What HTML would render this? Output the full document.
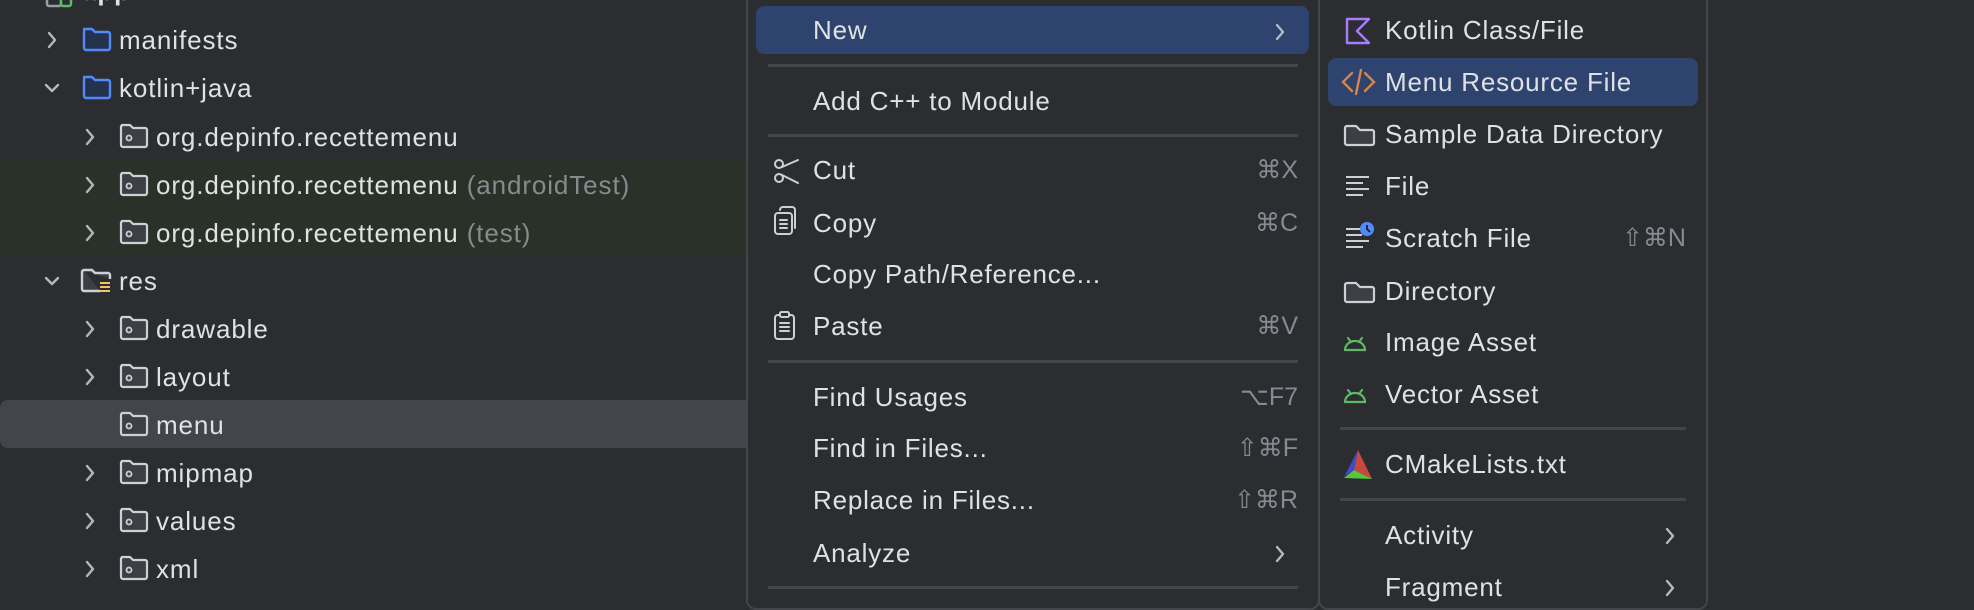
<!DOCTYPE html>
<html><head><meta charset="utf-8"><style>
*{margin:0;padding:0;box-sizing:border-box}
body{width:1974px;height:598px;background:#2b2d30;overflow:hidden;position:relative;font-family:"Liberation Sans",sans-serif;color:#dfe1e5}
.a{position:absolute}
.t{position:absolute;font-size:26px;letter-spacing:.9px;line-height:30px;white-space:nowrap}
.m{position:absolute;font-size:26px;letter-spacing:.8px;line-height:30px;white-space:nowrap}
.g{color:#868a91}
.sc{position:absolute;font-size:25px;color:#868a91;line-height:30px;white-space:nowrap;text-align:right}
.sep{position:absolute;height:3px;background:#43454a}
svg{position:absolute;overflow:visible}
</style></head><body>
<div class="a" style="left:0;top:160px;width:748px;height:96px;background:#2a3128"></div>
<div class="a" style="left:0;top:400px;width:748px;height:48px;background:#43454a;border-radius:8px 0 0 8px"></div>

<svg style="left:45px;top:-14px" width="30" height="22"><rect x="2" y="0" width="14" height="20" rx="2" fill="none" stroke="#9a9da3" stroke-width="2.5"/><rect x="16" y="4" width="10" height="16" rx="2" fill="#2b2d30" stroke="#5fb865" stroke-width="2.5"/></svg>
<div class="t" style="left:82px;top:-24px;font-weight:bold">app</div>

<svg style="left:0;top:0" width="760" height="598">
<g fill="none" stroke="#b4b8bf" stroke-width="2.4" stroke-linecap="round" stroke-linejoin="round">
<path d="M49 33 l6 7 -6 7"/>
<path d="M46 85 l6 6 6 -6"/>
<path d="M87 130 l6 7 -6 7"/>
<path d="M87 178 l6 7 -6 7"/>
<path d="M87 226 l6 7 -6 7"/>
<path d="M46 278 l6 6 6 -6"/>
<path d="M87 322 l6 7 -6 7"/>
<path d="M87 370 l6 7 -6 7"/>
<path d="M87 466 l6 7 -6 7"/>
<path d="M87 514 l6 7 -6 7"/>
<path d="M87 562 l6 7 -6 7"/>
</g>
<g fill="#25324d" stroke="#548af7" stroke-width="2.4" stroke-linejoin="round">
<path d="M84 29 h8 l3 3 h13 a2 2 0 0 1 2 2 v14 a2 2 0 0 1 -2 2 h-22 a2 2 0 0 1 -2 -2 v-17 a2 2 0 0 1 2 -2z"/>
<path d="M84 77 h8 l3 3 h13 a2 2 0 0 1 2 2 v14 a2 2 0 0 1 -2 2 h-22 a2 2 0 0 1 -2 -2 v-17 a2 2 0 0 1 2 -2z"/>
</g>
<path d="M84 270 h8 l3 3 h13 a2 2 0 0 1 2 2 v4 M100 291 h-16 a2 2 0 0 1 -2 -2 v-17 a2 2 0 0 1 2 -2" fill="#3c3f45" stroke="#ced0d6" stroke-width="2.4"/>
<g stroke="#f2c55c" stroke-width="2"><path d="M100 283 h10 M100 287 h10 M100 291 h10"/></g>
<g fill="#3c3f45" stroke="#ced0d6" stroke-width="2.2" stroke-linejoin="round">
<path d="M122 125 h8 l3 3 h12 a2 2 0 0 1 2 2 v15 a2 2 0 0 1 -2 2 h-22 a2 2 0 0 1 -2 -2 v-18 a2 2 0 0 1 2 -2z"/><circle cx="129" cy="138" r="2.5" fill="none" stroke-width="1.8"/>
<path d="M122 173 h8 l3 3 h12 a2 2 0 0 1 2 2 v15 a2 2 0 0 1 -2 2 h-22 a2 2 0 0 1 -2 -2 v-18 a2 2 0 0 1 2 -2z"/><circle cx="129" cy="186" r="2.5" fill="none" stroke-width="1.8"/>
<path d="M122 221 h8 l3 3 h12 a2 2 0 0 1 2 2 v15 a2 2 0 0 1 -2 2 h-22 a2 2 0 0 1 -2 -2 v-18 a2 2 0 0 1 2 -2z"/><circle cx="129" cy="234" r="2.5" fill="none" stroke-width="1.8"/>
<path d="M122 317 h8 l3 3 h12 a2 2 0 0 1 2 2 v15 a2 2 0 0 1 -2 2 h-22 a2 2 0 0 1 -2 -2 v-18 a2 2 0 0 1 2 -2z"/><circle cx="129" cy="330" r="2.5" fill="none" stroke-width="1.8"/>
<path d="M122 365 h8 l3 3 h12 a2 2 0 0 1 2 2 v15 a2 2 0 0 1 -2 2 h-22 a2 2 0 0 1 -2 -2 v-18 a2 2 0 0 1 2 -2z"/><circle cx="129" cy="378" r="2.5" fill="none" stroke-width="1.8"/>
<path d="M122 413 h8 l3 3 h12 a2 2 0 0 1 2 2 v15 a2 2 0 0 1 -2 2 h-22 a2 2 0 0 1 -2 -2 v-18 a2 2 0 0 1 2 -2z"/><circle cx="129" cy="426" r="2.5" fill="none" stroke-width="1.8"/>
<path d="M122 461 h8 l3 3 h12 a2 2 0 0 1 2 2 v15 a2 2 0 0 1 -2 2 h-22 a2 2 0 0 1 -2 -2 v-18 a2 2 0 0 1 2 -2z"/><circle cx="129" cy="474" r="2.5" fill="none" stroke-width="1.8"/>
<path d="M122 509 h8 l3 3 h12 a2 2 0 0 1 2 2 v15 a2 2 0 0 1 -2 2 h-22 a2 2 0 0 1 -2 -2 v-18 a2 2 0 0 1 2 -2z"/><circle cx="129" cy="522" r="2.5" fill="none" stroke-width="1.8"/>
<path d="M122 557 h8 l3 3 h12 a2 2 0 0 1 2 2 v15 a2 2 0 0 1 -2 2 h-22 a2 2 0 0 1 -2 -2 v-18 a2 2 0 0 1 2 -2z"/><circle cx="129" cy="570" r="2.5" fill="none" stroke-width="1.8"/>
</g>
</svg>
<div class="t" style="left:119px;top:25px">manifests</div>
<div class="t" style="left:119px;top:73px">kotlin+java</div>
<div class="t" style="left:156px;top:122px">org.depinfo.recettemenu</div>
<div class="t" style="left:156px;top:170px">org.depinfo.recettemenu <span class="g">(androidTest)</span></div>
<div class="t" style="left:156px;top:218px">org.depinfo.recettemenu <span class="g">(test)</span></div>
<div class="t" style="left:119px;top:266px">res</div>
<div class="t" style="left:156px;top:314px">drawable</div>
<div class="t" style="left:156px;top:362px">layout</div>
<div class="t" style="left:156px;top:410px">menu</div>
<div class="t" style="left:156px;top:458px">mipmap</div>
<div class="t" style="left:156px;top:506px">values</div>
<div class="t" style="left:156px;top:554px">xml</div>

<div class="a" style="left:746px;top:-10px;width:574px;height:620px;background:#2b2d30;border:2px solid #43454a;border-radius:10px"></div>
<div class="a" style="left:756px;top:6px;width:553px;height:48px;background:#2e436e;border-radius:8px"></div>
<div class="m" style="left:813px;top:15px">New</div>
<div class="sep" style="left:768px;top:64px;width:530px"></div>
<div class="m" style="left:813px;top:86px">Add C++ to Module</div>
<div class="sep" style="left:768px;top:134px;width:530px"></div>
<div class="m" style="left:813px;top:155px">Cut</div><div class="sc" style="right:676px;top:155px">⌘X</div>
<div class="m" style="left:813px;top:208px">Copy</div><div class="sc" style="right:676px;top:208px">⌘C</div>
<div class="m" style="left:813px;top:259px">Copy Path/Reference...</div>
<div class="m" style="left:813px;top:311px">Paste</div><div class="sc" style="right:676px;top:311px">⌘V</div>
<div class="sep" style="left:768px;top:360px;width:530px"></div>
<div class="m" style="left:813px;top:382px">Find Usages</div><div class="sc" style="right:676px;top:382px">⌥F7</div>
<div class="m" style="left:813px;top:433px">Find in Files...</div><div class="sc" style="right:676px;top:433px">⇧⌘F</div>
<div class="m" style="left:813px;top:485px">Replace in Files...</div><div class="sc" style="right:676px;top:485px">⇧⌘R</div>
<div class="m" style="left:813px;top:538px">Analyze</div>
<div class="sep" style="left:768px;top:586px;width:530px"></div>
<svg style="left:740px;top:0" width="580" height="598">
<g fill="none" stroke="#b4b8bf" stroke-width="2.4" stroke-linecap="round" stroke-linejoin="round">
<path d="M537 25 l6 7 -6 7"/><path d="M537 547 l6 7 -6 7"/>
</g>
<g fill="none" stroke="#ced0d6" stroke-width="2" stroke-linecap="round">
<circle cx="39" cy="164" r="4"/><circle cx="39" cy="178" r="4"/><path d="M42 167 L58 160 M42 175 L58 183"/>
<rect x="35" y="213" width="17" height="21" rx="3"/><path d="M40 210 a3 3 0 0 1 3 -3 h9 a3 3 0 0 1 3 3 v18"/><path d="M40 220 h7 M40 224 h7 M40 228 h7"/>
<rect x="35" y="315" width="19" height="24" rx="3"/><rect x="40" y="312" width="9" height="5" rx="1.5" fill="#2b2d30"/><path d="M40 323 h9 M40 327 h9 M40 331 h9"/>
</g>
</svg>

<div class="a" style="left:1318px;top:-10px;width:390px;height:620px;background:#2b2d30;border:2px solid #43454a;border-radius:10px"></div>
<div class="a" style="left:1328px;top:58px;width:370px;height:48px;background:#2e436e;border-radius:8px"></div>
<div class="m" style="left:1385px;top:15px">Kotlin Class/File</div>
<div class="m" style="left:1385px;top:67px">Menu Resource File</div>
<div class="m" style="left:1385px;top:119px">Sample Data Directory</div>
<div class="m" style="left:1385px;top:171px">File</div>
<div class="m" style="left:1385px;top:223px">Scratch File</div><div class="sc" style="right:288px;top:223px">⇧⌘N</div>
<div class="m" style="left:1385px;top:276px">Directory</div>
<div class="m" style="left:1385px;top:327px">Image Asset</div>
<div class="m" style="left:1385px;top:379px">Vector Asset</div>
<div class="sep" style="left:1340px;top:427px;width:346px"></div>
<div class="m" style="left:1385px;top:449px">CMakeLists.txt</div>
<div class="sep" style="left:1340px;top:498px;width:346px"></div>
<div class="m" style="left:1385px;top:520px">Activity</div>
<div class="m" style="left:1385px;top:572px">Fragment</div>
<svg style="left:1300px;top:0" width="420" height="598">
<g fill="none" stroke="#b4b8bf" stroke-width="2.4" stroke-linecap="round" stroke-linejoin="round">
<path d="M367 529 l6 7 -6 7"/><path d="M367 581 l6 7 -6 7"/>
</g>
<path d="M47 19 h22 l-12 12 12 12 h-22z" fill="none" stroke="#a97bff" stroke-width="2.4" stroke-linejoin="round"/>
<g fill="none" stroke="#d7834d" stroke-width="2.4" stroke-linecap="round"><path d="M52 73 l-9 9 9 9 M65 73 l9 9 -9 9 M61 70 l-5 24"/></g>
<g fill="#3c3f45" stroke="#ced0d6" stroke-width="2.2" stroke-linejoin="round">
<path d="M47 126 h9 l4 4 h12 a2 2 0 0 1 2 2 v11 a2 2 0 0 1 -2 2 h-25 a2 2 0 0 1 -2 -2 v-15 a2 2 0 0 1 2 -2z"/>
<path d="M47 283 h9 l4 4 h12 a2 2 0 0 1 2 2 v11 a2 2 0 0 1 -2 2 h-25 a2 2 0 0 1 -2 -2 v-15 a2 2 0 0 1 2 -2z"/>
</g>
<g stroke="#ced0d6" stroke-width="2"><path d="M46 177 h23 M46 183 h17 M46 189 h23 M46 195 h17"/>
<path d="M46 229 h14 M46 235 h16 M46 241 h23 M46 247 h17"/></g>
<circle cx="67" cy="229" r="7" fill="#548af7"/><path d="M67 225 v4 l3 3" stroke="#1e1f22" stroke-width="1.8" fill="none"/>
<g fill="none" stroke="#5fb865" stroke-width="2.2" stroke-linecap="round">
<path d="M45 350 a10 9 0 0 1 20 0 z M48 338 l3 4 M62 338 l-3 4"/>
<path d="M45 402 a10 9 0 0 1 20 0 z M48 390 l3 4 M62 390 l-3 4"/>
</g>
<polygon points="58,450 44,477 54,470" fill="#3e4bd0"/>
<polygon points="58,450 54,470 72,479" fill="#c8483f"/>
<polygon points="44,478 54,470 72,479" fill="#55c83a"/>
</svg>
</body></html>
